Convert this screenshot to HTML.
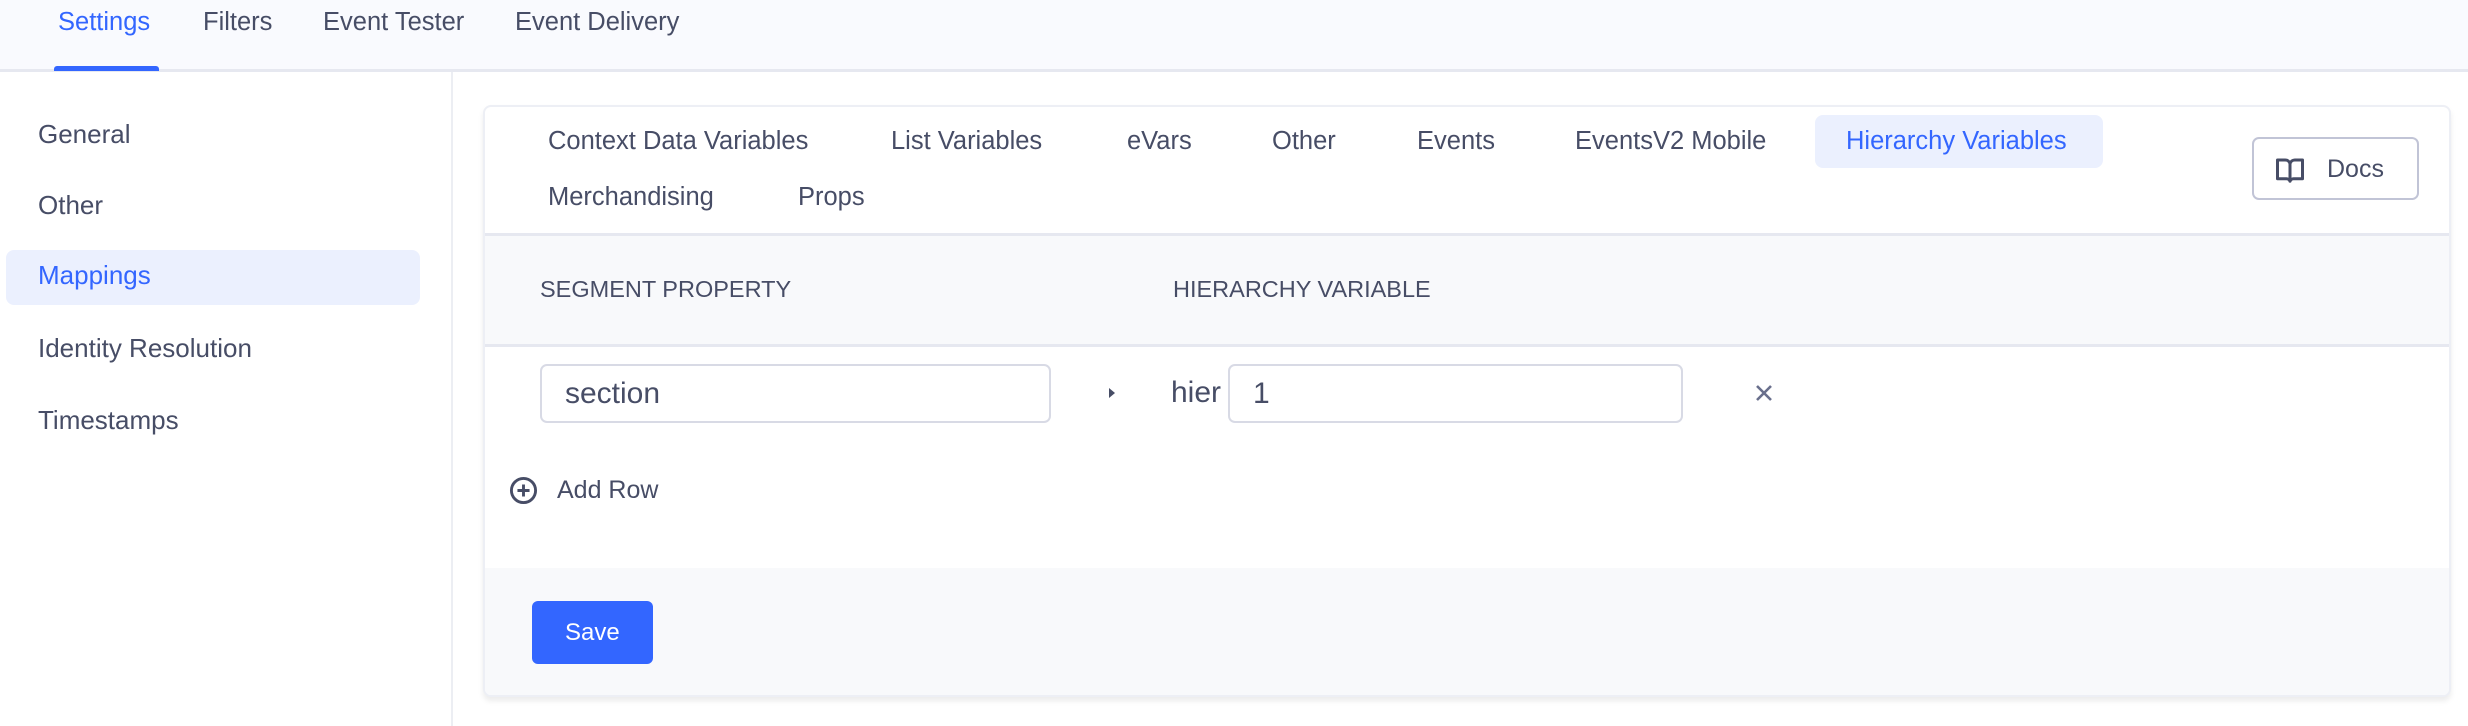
<!DOCTYPE html>
<html><head><meta charset="utf-8"><style>
*{box-sizing:border-box;margin:0;padding:0}
body{width:2468px;height:726px;background:#fff;font-family:"Liberation Sans",sans-serif;color:#474d66;position:relative;overflow:hidden}
.a{position:absolute;white-space:nowrap;line-height:1}
.top{position:absolute;left:0;top:0;width:2468px;height:72px;background:#f9fafe;border-bottom:3px solid #e6e8f0}
.t{font-size:25.5px;top:10px}
.side{position:absolute;left:451px;top:72px;width:2px;height:654px;background:#eceef3}
.s{font-size:26px;left:38px}
.card{position:absolute;left:483px;top:105px;width:1968px;height:592px;border:2px solid #edeff5;border-radius:8px;background:#fff;box-shadow:0 4px 6px rgba(0,0,0,.08);overflow:hidden}
.tb{font-size:25.5px}
.inp{position:absolute;border:2px solid #d8dae5;border-radius:7px;background:#fff}
</style></head><body>
<div class="top"></div>
<div class="a t" style="left:58px;color:#3366ff">Settings</div>
<div style="position:absolute;left:54px;top:66px;width:105px;height:5px;background:#3366ff;border-radius:3px 3px 0 0"></div>
<div class="a t" style="left:203px">Filters</div>
<div class="a t" style="left:323px">Event Tester</div>
<div class="a t" style="left:515px">Event Delivery</div>
<div class="side"></div>
<div class="a s" style="top:121px">General</div>
<div class="a s" style="top:192px">Other</div>
<div style="position:absolute;left:6px;top:250px;width:414px;height:55px;background:#ebf0fe;border-radius:8px"></div>
<div class="a s" style="top:262px;color:#3366ff">Mappings</div>
<div class="a s" style="top:335px">Identity Resolution</div>
<div class="a s" style="top:407px">Timestamps</div>
<div class="card">
 <div style="position:absolute;left:0;top:126px;width:100%;height:114px;background:#f8f9fb;border-top:3px solid #e6e8f0;border-bottom:3px solid #e6e8f0"></div>
 <div style="position:absolute;left:0;top:461px;width:100%;height:131px;background:#f8f9fb"></div>
</div>
<div style="position:absolute;left:1815px;top:115px;width:288px;height:53px;background:#ebf0fe;border-radius:8px"></div>
<div class="a tb" style="left:548px;top:129px">Context Data Variables</div>
<div class="a tb" style="left:891px;top:129px">List Variables</div>
<div class="a tb" style="left:1127px;top:129px">eVars</div>
<div class="a tb" style="left:1272px;top:129px">Other</div>
<div class="a tb" style="left:1417px;top:129px">Events</div>
<div class="a tb" style="left:1575px;top:129px">EventsV2 Mobile</div>
<div class="a tb" style="left:1846px;top:129px;color:#3366ff">Hierarchy Variables</div>
<div class="a tb" style="left:548px;top:185px">Merchandising</div>
<div class="a tb" style="left:798px;top:185px">Props</div>
<div style="position:absolute;left:2252px;top:137px;width:167px;height:63px;border:2px solid #c1c4d6;border-radius:7px;background:#fff"></div>
<svg class="a" style="left:2275px;top:155px" width="30" height="30" viewBox="0 0 24 24" fill="none" stroke="#474d66" stroke-width="2.4" stroke-linejoin="round"><path d="M2 4h6a4 4 0 0 1 4 3v14a3 3 0 0 0-3-2H2zM22 4h-6a4 4 0 0 0-4 3v14a3 3 0 0 1 3-2h7z"/></svg>
<div class="a" style="left:2327px;top:157px;font-size:25px">Docs</div>
<div class="a" style="left:540px;top:278px;font-size:23.5px">SEGMENT PROPERTY</div>
<div class="a" style="left:1173px;top:278px;font-size:23.5px">HIERARCHY VARIABLE</div>
<div class="inp" style="left:540px;top:364px;width:511px;height:59px"></div>
<div class="a" style="left:565px;top:379px;font-size:30px">section</div>
<svg class="a" style="left:1107px;top:385px" width="10" height="16" viewBox="0 0 10 16"><path d="M2 3l6 5-6 5z" fill="#474d66"/></svg>
<div class="a" style="left:1171px;top:378px;font-size:30px">hier</div>
<div class="inp" style="left:1228px;top:364px;width:455px;height:59px"></div>
<div class="a" style="left:1253px;top:379px;font-size:30px">1</div>
<svg class="a" style="left:1754px;top:383px" width="20" height="20" viewBox="0 0 20 20" stroke="#696f8c" stroke-width="2.6"><path d="M3 3l14 14M17 3L3 17"/></svg>
<svg class="a" style="left:509px;top:476px" width="29" height="29" viewBox="0 0 24 24" fill="none" stroke="#474d66" stroke-width="2.4"><circle cx="12" cy="12" r="10"/><path d="M12 7v10M7 12h10"/></svg>
<div class="a" style="left:557px;top:478px;font-size:25px">Add Row</div>
<div style="position:absolute;left:532px;top:601px;width:121px;height:63px;background:#3366ff;border-radius:6px"></div>
<div class="a" style="left:565px;top:621px;font-size:24px;color:#fff">Save</div>
</body></html>
